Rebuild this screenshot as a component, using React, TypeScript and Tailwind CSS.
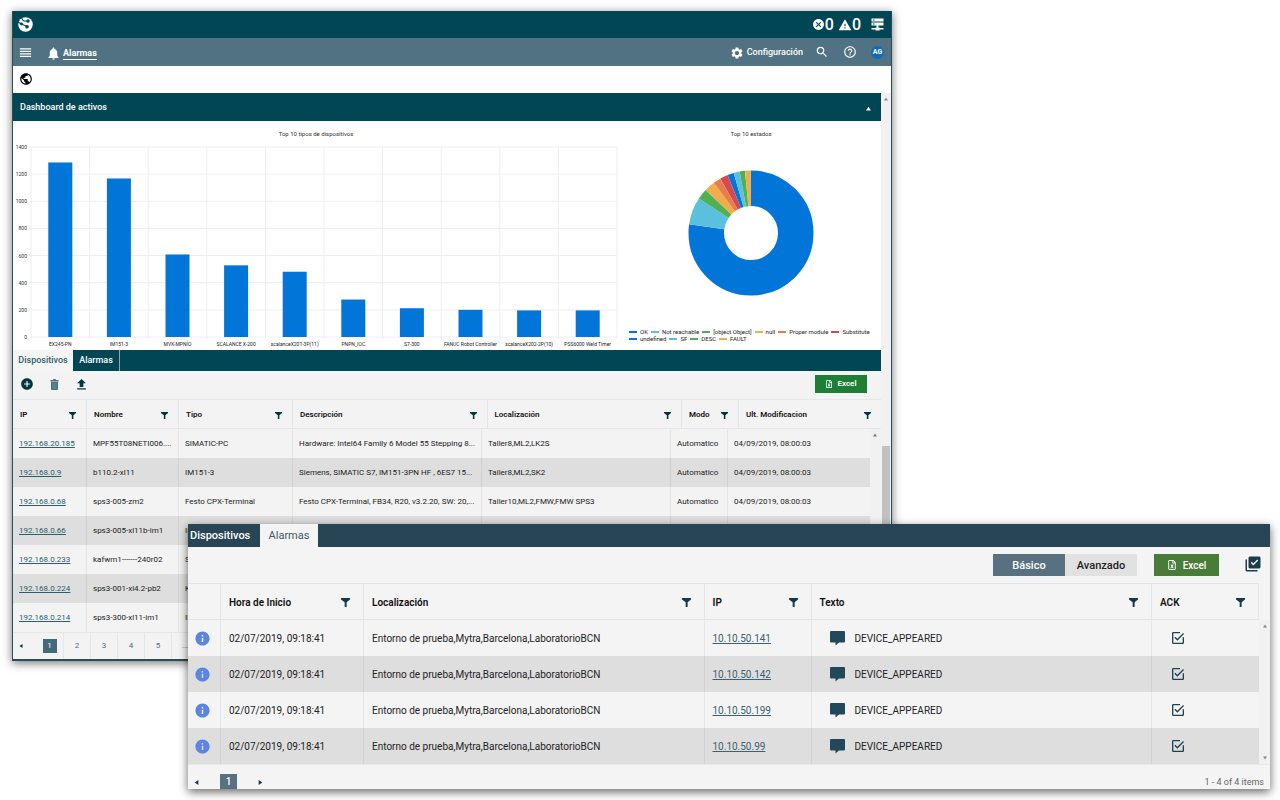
import { FaRegFileExcel } from "react-icons/fa";
import {
  MdAddCircle,
  MdCancel,
  MdHelpOutline,
  MdInfo,
  MdLibraryAddCheck,
  MdNotifications,
  MdPublic,
  MdReorder,
  MdSearch,
  MdSettings,
  MdUpload,
  MdWarning,
} from "react-icons/md";

const deviceTypes = [
  { name: "EX245-PN", total: 1286 },
  { name: "IM151-3", total: 1168 },
  { name: "MVK-MPNIO", total: 608 },
  { name: "SCALANCE X-200", total: 528 },
  { name: "scalanceX201-3P(11)", total: 481 },
  { name: "PNPN_IOC", total: 276 },
  { name: "S7-300", total: 212 },
  { name: "FANUC Robot Controller", total: 200 },
  { name: "scalanceX202-2P(10)", total: 196 },
  { name: "PSS6000 Weld Timer", total: 196 },
];

// share is given in degrees
const states = [
  { name: "OK", share: 278, color: "#0275d8" },
  { name: "Not reachable", share: 25.5, color: "#5bc0de" },
  { name: "[object Object]", share: 10, color: "#4fb153" },
  { name: "null", share: 10, color: "#f0ad4e" },
  { name: "Proper module", share: 7, color: "#e67d4a" },
  { name: "Substitute", share: 7.5, color: "#d9484f" },
  { name: "undefined", share: 6, color: "#0275d8" },
  { name: "SF", share: 5.5, color: "#5bc0de" },
  { name: "DESC", share: 5, color: "#4fb153" },
  { name: "FAULT", share: 5.5, color: "#f0ad4e" },
];

const deviceColumns = [
  { title: "IP", width: "w-[74px]" },
  { title: "Nombre", width: "w-[92px]" },
  { title: "Tipo", width: "w-[114px]" },
  { title: "Descripción", width: "" },
  { title: "Localización", width: "" },
  { title: "Modo", width: "w-[57px]" },
  { title: "Ult. Modificacion", width: "w-[142px]" },
];

const devices = [
  ["192.168.20.185", "MPF55T08NETI006....", "SIMATIC-PC", "Hardware: Intel64 Family 6 Model 55 Stepping 8...", "Taller8,ML2,LK2S"],
  ["192.168.0.9", "b110.2-xl11", "IM151-3", "Siemens, SIMATIC S7, IM151-3PN HF , 6ES7 15...", "Taller8,ML2,SK2"],
  ["192.168.0.68", "sps3-005-zm2", "Festo CPX-Terminal", "Festo CPX-Terminal, FB34, R20, v3.2.20, SW: 20,...", "Taller10,ML2,FMW,FMW SPS3"],
  ["192.168.0.66", "sps3-005-xl11b-im1", "IM", "", ""],
  ["192.168.0.233", "kafwm1-------240r02", "S7", "", ""],
  ["192.168.0.224", "sps3-001-xl4.2-pb2", "KP", "", ""],
  ["192.168.0.214", "sps3-300-xl11-im1", "IM", "", ""],
];

const alarmColumns = [
  { title: "", width: "w-[33px]" },
  { title: "Hora de Inicio", width: "w-[143px]" },
  { title: "Localización", width: "" },
  { title: "IP", width: "w-[107px]" },
  { title: "Texto", width: "" },
  { title: "ACK", width: "w-[107px]" },
];

const alarms = ["10.10.50.141", "10.10.50.142", "10.10.50.199", "10.10.50.99"];

function FilterIcon({ className }: { className: string }) {
  return (
    <svg viewBox="0 0 16 16" className={className} fill="currentColor" aria-hidden="true">
      <path d="M0 0h16v2.500L10 7.500V16H6.500V7.500L0 2.500z" />
    </svg>
  );
}

function Arrow({ dir, className }: { dir: "up" | "down" | "left" | "right"; className: string }) {
  const paths = {
    up: "M0 7h8L4 1z",
    down: "M0 1h8L4 7z",
    left: "M7 0v8L1 4z",
    right: "M1 0v8l6-4z",
  };
  return (
    <svg viewBox="0 0 8 8" className={className} fill="currentColor" aria-hidden="true">
      <path d={paths[dir]} />
    </svg>
  );
}

function Logo() {
  return (
    <svg viewBox="0 0 30 30" className="size-[15px]" aria-hidden="true">
      <circle cx="15" cy="15" r="14.500" fill="#fff" />
      <g stroke="#004655" strokeWidth="2.200" fill="#004655">
        <path d="M0 10 7 14l11 5M11 8h10M11 8 7 2" fill="none" />
        <circle cx="7" cy="14" r="1.800" />
        <circle cx="18" cy="19.500" r="2.500" />
        <circle cx="20" cy="8" r="2.300" />
      </g>
    </svg>
  );
}

function ServerIcon() {
  return (
    <svg viewBox="0 0 26 26" className="size-[13px]" fill="#fff" aria-hidden="true">
      <path d="M1 1h24v6H1zM1 9h24v6H1zM11 15h4v4h-4zM1 20h24v3H1zM9 19h8v6H9z" />
      <path d="M4 3h3v2H4zM4 11h3v2H4z" fill="#004655" />
    </svg>
  );
}

function TrashIcon() {
  return (
    <svg viewBox="0 0 18 22" className="h-[11px] w-[9px]" aria-hidden="true">
      <path d="M1 2h5l1-2h4l1 2h5v3H1zM2 6h14v14q0 2-2 2H4q-2 0-2-2z" fill="#47727e" />
      <path d="M6 8v12M9 8v12M12 8v12" stroke="#86a2aa" strokeWidth="1" />
    </svg>
  );
}

function BarChart() {
  const bottom = 216;
  const scale = 190 / 1400;
  const left = 18;
  const step = 58.6;
  const ticks = [0, 200, 400, 600, 800, 1000, 1200, 1400];
  return (
    <svg viewBox="0 0 608 229" className="min-w-0 flex-[608] self-start" role="img" aria-label="Top 10 tipos de dispositivos">
      <text x="303" y="15" fontSize="6" textAnchor="middle" fill="#333">
        Top 10 tipos de dispositivos
      </text>
      {ticks.map((t) => (
        <g key={t}>
          <path d={`M${left - 2} ${bottom - t * scale}H${left + step * 10}`} stroke="#eee" />
          <text x="14" y={bottom - t * scale + 2} fontSize="5" textAnchor="end" fill="#333">
            {t}
          </text>
        </g>
      ))}
      {[...deviceTypes, null].map((_, i) => (
        <path key={i} d={`M${left + step * i} 26V218`} stroke="#eee" />
      ))}
      {deviceTypes.map((d, i) => (
        <g key={d.name}>
          <rect x={left + step * (i + 0.5) - 12} y={bottom - d.total * scale} width="24" height={d.total * scale} fill="#0275d8" />
          <text x={left + step * (i + 0.5)} y="225" fontSize="5" textAnchor="middle" fill="#222">
            {d.name}
          </text>
        </g>
      ))}
    </svg>
  );
}

function Donut() {
  let start = 0;
  return (
    <svg viewBox="0 0 126 126" className="w-[126px]" role="img" aria-label="Top 10 estados">
      {states.map((s) => {
        const angle = start - 90;
        start += s.share;
        return (
          <circle
            key={s.name}
            cx="63"
            cy="63"
            r="44.750"
            fill="none"
            stroke={s.color}
            strokeWidth="35.500"
            pathLength="360"
            strokeDasharray={`${s.share} 360`}
            transform={`rotate(${angle} 63 63)`}
          />
        );
      })}
    </svg>
  );
}

function DevicesHead() {
  return (
    <table className="w-full table-fixed border-separate border-spacing-0 text-[8px]">
      <thead>
        <tr>
          {deviceColumns.map((c) => (
            <th key={c.title} className={`h-[30px] border-y border-r border-[#e3e7e9] pl-[7px] pr-2.5 pt-0.5 text-left font-semibold text-[#111] last:border-r-0 ${c.width}`}>
              <div className="flex items-center justify-between whitespace-nowrap">
                {c.title}
                <button aria-label={`Filtrar ${c.title}`} className="text-[#003545]">
                  <FilterIcon className="size-[7px]" />
                </button>
              </div>
            </th>
          ))}
        </tr>
      </thead>
    </table>
  );
}

function DevicesBody() {
  return (
    <table aria-label="Dispositivos" className="w-full table-fixed border-separate border-spacing-0 text-[8px] text-[#222]">
      <colgroup>
        {deviceColumns.map((c) => (
          <col key={c.title} className={c.width} />
        ))}
      </colgroup>
      <tbody>
        {devices.map((row) => (
          <tr key={row[0]} className="even:bg-[#dedede]">
            {[...row, "Automatico", "04/09/2019, 08:00:03"].map((cell, i) => (
              <td key={i} className="h-[29px] whitespace-nowrap border-r border-black/5 pl-1.5 last:border-r-0">
                {i === 0 ? (
                  <a href="#" className="text-[#2b5d6d] underline underline-offset-1">
                    {cell}
                  </a>
                ) : (
                  cell
                )}
              </td>
            ))}
          </tr>
        ))}
      </tbody>
    </table>
  );
}

function DevicesWindow() {
  return (
    <section className="ml-3 w-11/16 border-x border-b-2 border-[#2b4b59] bg-white shadow-[0_2px_9px_rgba(0,0,0,0.55)]">
      <header>
        <div className="flex h-[27px] items-center justify-between bg-[#004655] pl-[5px] pr-[7px] text-white">
          <Logo />
          <div className="flex items-center text-base font-medium leading-none">
            <MdCancel className="size-[13px]" />
            <span>0</span>
            <MdWarning className="ml-1 size-3.5" />
            <span>0</span>
            <span className="ml-2.5">
              <ServerIcon />
            </span>
          </div>
        </div>
        <nav className="flex h-7 items-center bg-[#507282] pl-[5px] pr-[7px] text-[9px] font-medium text-white">
          <button aria-label="Menú">
            <MdReorder className="size-[15px]" />
          </button>
          <a href="#" className="ml-[13px] flex items-center gap-0.5 pt-0.5 font-bold">
            <MdNotifications className="size-[15px]" />
            <span className="border-b border-white leading-3">Alarmas</span>
          </a>
          <a href="#" className="ml-auto flex items-center gap-[3px] pt-0.5">
            <MdSettings className="size-[14px]" />
            Configuración
          </a>
          <button aria-label="Buscar" className="ml-3">
            <MdSearch className="size-3.5" />
          </button>
          <button aria-label="Ayuda" className="ml-3.5">
            <MdHelpOutline className="size-3.5" />
          </button>
          <button className="ml-3.5 flex size-[13px] items-center justify-center rounded-full bg-[#0f6cb8] text-[7px] font-bold">
            AG
          </button>
        </nav>
        <div className="flex h-[27px] items-center pb-0.5 pl-1.5 text-black">
          <MdPublic className="size-3.5" />
        </div>
      </header>

      <div className="flex">
        <main className="min-w-0 flex-1">
          <div className="flex h-7 items-center justify-between bg-[#004655] pl-[7px] pr-2.5 pt-0.5 text-white">
            <h1 className="text-[9px] font-medium">Dashboard de activos</h1>
            <button aria-label="Contraer">
              <Arrow dir="up" className="size-[5px]" />
            </button>
          </div>
          <div className="flex">
            <BarChart />
            <div className="flex flex-[260] flex-col items-center">
              <h2 className="pt-2 text-[6px] leading-[10px] text-[#333]">Top 10 estados</h2>
              <div className="mt-[31px]">
                <Donut />
              </div>
              <ul className="mt-auto mb-2 flex w-full flex-wrap gap-x-[3px] pl-2 text-[6px] leading-[7px] text-[#222]">
                {states.map((s) => (
                  <li key={s.name} className="flex items-center gap-[3px] whitespace-nowrap">
                    <span className="h-0.5 w-2" style={{ backgroundColor: s.color }} />
                    {s.name}
                  </li>
                ))}
              </ul>
            </div>
          </div>

          <div role="tablist" className="flex h-[21px] bg-[#004655] text-[9px] font-medium">
            <button role="tab" aria-selected="true" className="w-[60px] bg-[#f4f4f4] pt-px text-[#2f6170]">
              Dispositivos
            </button>
            <button role="tab" aria-selected="false" className="w-[47px] border-r border-[#8aa8b0] pt-px text-white">
              Alarmas
            </button>
          </div>

          <div className="bg-[#f3f3f3]">
            <div className="flex h-7 items-center pb-0.5 pl-[7px] pr-3.5">
              <button aria-label="Añadir" className="text-[#003545]">
                <MdAddCircle className="size-3.5" />
              </button>
              <button aria-label="Eliminar" className="ml-4">
                <TrashIcon />
              </button>
              <button aria-label="Subir" className="ml-[15px] text-[#003545]">
                <MdUpload className="size-[15px]" />
              </button>
              <button className="ml-auto flex h-[18px] w-[52px] items-center justify-center gap-1 bg-[#1d7f35] text-[8px] font-semibold text-white">
                <FaRegFileExcel className="size-2" />
                Excel
              </button>
            </div>
            <DevicesHead />
            <div className="flex">
              <div className="min-w-0 flex-1">
                <DevicesBody />
              </div>
              <div className="w-[11px] bg-[#f1f1f1] pl-[3px] pt-1 text-[#777]">
                <Arrow dir="up" className="size-1" />
              </div>
            </div>
            <div className="flex h-[27px] items-stretch border-t border-[#e3e7e9] text-[8px] text-[#4b7080]">
              <button aria-label="Anterior" className="w-[23px] pl-1.5 text-[#003545]">
                <Arrow dir="left" className="size-1" />
              </button>
              <button className="flex w-7 items-center justify-center border-r border-[#e3e7e9]">
                <span className="size-3.5 bg-[#44697a] leading-[14px] text-white">1</span>
              </button>
              {["2", "3", "4", "5", "..."].map((p) => (
                <button key={p} className="w-[27px] border-r border-[#e3e7e9]">
                  {p}
                </button>
              ))}
            </div>
          </div>
        </main>
        <div className="flex w-2.5 flex-col items-center bg-[#f1f1f1]">
          <div className="flex h-3 items-center text-[#888]">
            <Arrow dir="up" className="size-1" />
          </div>
          <div className="h-[341px]" />
          <div className="w-2 flex-1 bg-[#c1c1c1]" />
        </div>
      </div>
    </section>
  );
}

function CheckBox({ label }: { label: string }) {
  return (
    <label className="relative block w-4 text-[#1f4354]">
      <input type="checkbox" defaultChecked aria-label={label} className="peer sr-only" />
      <svg viewBox="0 0 24 24" className="size-4" fill="currentColor" aria-hidden="true">
        <path d="M19 19H5V5h10V3H5c-1.110 0-2 .890-2 2v14a2 2 0 0 0 2 2h14a2 2 0 0 0 2-2v-8h-2M7.910 10.080 6.500 11.500 11 16 21 6l-1.410-1.420L11 13.170z" />
      </svg>
    </label>
  );
}

function AlarmsWindow() {
  const cell = "h-9 border-r border-black/5 px-2 last:border-r-0";
  return (
    <section className="absolute left-[188px] right-2.5 top-[524px] bg-[#f4f4f4] text-[#222] shadow-[0_3px_9px_rgba(0,0,0,0.6)]">
      <div role="tablist" className="flex h-[23px] bg-[#274554] text-[11px]">
        <button role="tab" aria-selected="false" className="w-[72px] pl-0.5 pt-0.5 text-left font-medium text-white">
          Dispositivos
        </button>
        <button role="tab" aria-selected="true" className="w-[58px] bg-[#f4f4f4] pt-0.5 text-[#3c5866]">
          Alarmas
        </button>
      </div>
      <div className="flex h-9 items-center justify-end pr-2 text-[11px]">
        <button className="h-[22px] w-[72px] bg-[#58707f] pt-0.5 font-medium text-white">Básico</button>
        <button className="h-[22px] w-[72px] bg-[#e1e1e1] pt-0.5 font-medium">Avanzado</button>
        <button className="ml-[17px] flex h-[22px] w-[65px] items-center justify-center gap-1.5 bg-[#487c38] text-[10px] font-medium text-white">
          <FaRegFileExcel className="size-2.5" />
          Excel
        </button>
        <button aria-label="Reconocer todas" className="ml-[25px] pb-0.5 text-[#1b3c4d]">
          <MdLibraryAddCheck className="size-[18px]" />
        </button>
      </div>
      <div className="pr-[11px]">
        <table className="w-full table-fixed border-separate border-spacing-0 text-[10px]">
          <thead>
            <tr>
              {alarmColumns.map((c) => (
                <th key={c.title} className={`h-[37px] border-y border-r border-[#e1e5e8] pl-2 pr-[13px] pt-0.5 text-left font-semibold text-[#111] ${c.width}`}>
                  {c.title && (
                    <div className="flex items-center justify-between whitespace-nowrap">
                      {c.title}
                      <button aria-label={`Filtrar ${c.title}`} className="text-[#15394a]">
                        <FilterIcon className="size-[9px]" />
                      </button>
                    </div>
                  )}
                </th>
              ))}
            </tr>
          </thead>
        </table>
      </div>
      <div className="flex">
        <div className="min-w-0 flex-1">
          <table aria-label="Alarmas" className="w-full table-fixed border-separate border-spacing-0 text-[10px]">
            <colgroup>
              {alarmColumns.map((c) => (
                <col key={c.title} className={c.width} />
              ))}
            </colgroup>
            <tbody>
              {alarms.map((ip) => (
                <tr key={ip} className="even:bg-[#dedede]">
                  <td className="h-9 border-r border-black/5 pl-1.5">
                    <MdInfo className="size-[17px] text-[#5b84e4]" />
                  </td>
                  <td className={cell}>02/07/2019, 09:18:41</td>
                  <td className={cell}>Entorno de prueba,Mytra,Barcelona,LaboratorioBCN</td>
                  <td className={cell}>
                    <a href="#" className="text-[#3d6170] underline underline-offset-1">
                      {ip}
                    </a>
                  </td>
                  <td className={cell}>
                    <div className="flex items-center gap-2.5 pl-2.5">
                      <svg viewBox="0 0 30 30" className="size-[15px]" fill="#22495a" aria-hidden="true">
                        <path d="M2 0h26q2 0 2 2v19q0 2-2 2H18l-7 6v-6H2q-2 0-2-2V2q0-2 2-2z" />
                      </svg>
                      DEVICE_APPEARED
                    </div>
                  </td>
                  <td className={cell}>
                    <div className="pl-2.5">
                      <CheckBox label={`ACK ${ip}`} />
                    </div>
                  </td>
                </tr>
              ))}
            </tbody>
          </table>
        </div>
        <div className="flex w-[11px] flex-col items-center justify-between bg-[#f1f1f1] py-1 text-[#888]">
          <Arrow dir="up" className="size-1" />
          <Arrow dir="down" className="size-1" />
        </div>
      </div>
      <footer className="flex h-[25px] items-end border-t border-[#e8e8e8] pl-1.5 pr-1.5 text-[10px]">
        <button aria-label="Anterior" className="pb-1 text-[#1b3c4d]">
          <Arrow dir="left" className="size-[5px]" />
        </button>
        <button className="ml-[21px] h-[15px] w-[17px] bg-[#58707f] font-medium leading-[15px] text-white">1</button>
        <button aria-label="Siguiente" className="ml-[21px] pb-1 text-[#1b3c4d]">
          <Arrow dir="right" className="size-[5px]" />
        </button>
        <span className="ml-auto text-[9px] leading-[14px] text-[#666]">1 - 4 of 4 items</span>
      </footer>
    </section>
  );
}

export default function App() {
  return (
    <div className="relative min-h-screen bg-white pt-[11px] font-[Roboto,sans-serif]">
      <DevicesWindow />
      <AlarmsWindow />
    </div>
  );
}
